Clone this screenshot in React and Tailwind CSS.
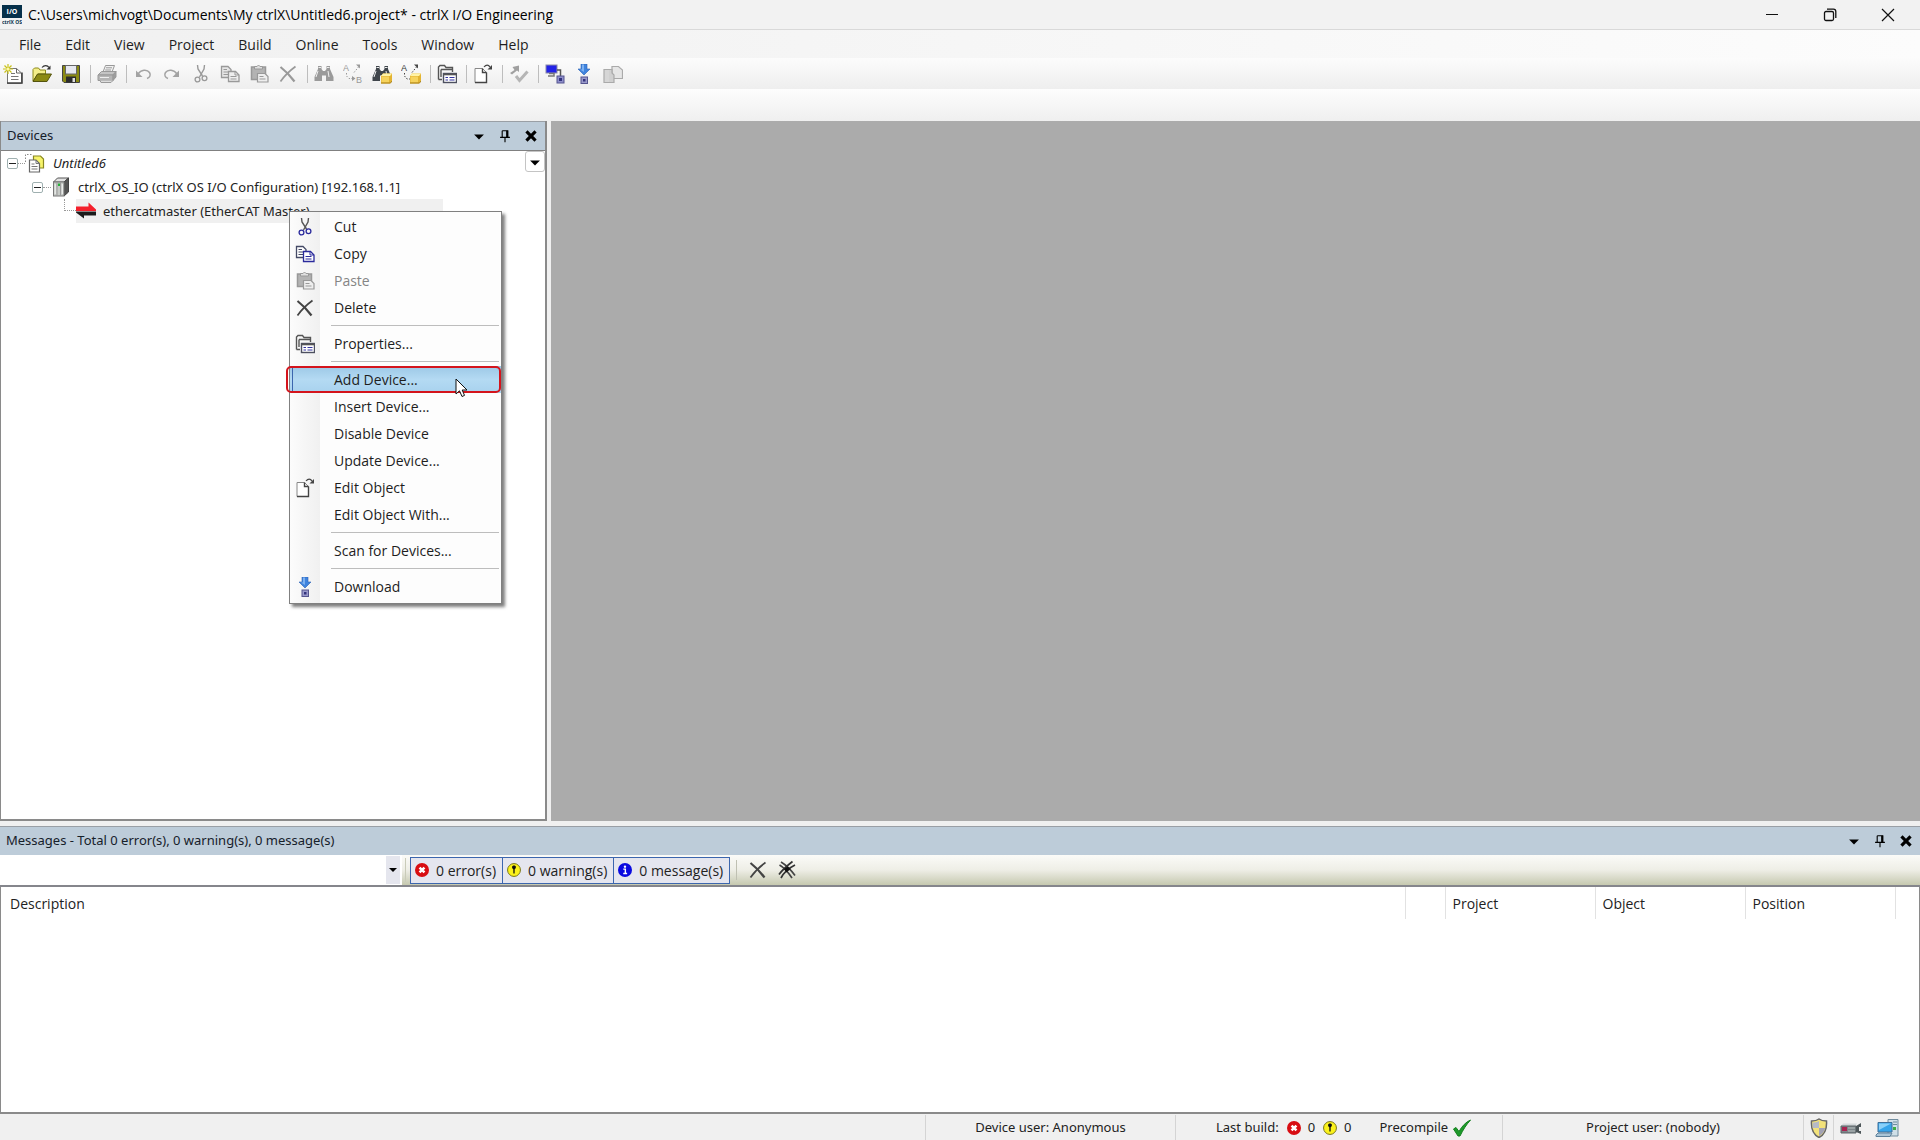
/**
 * ctrlX I/O Engineering main window
 * - Title bar, menu bar and toolbars
 * - Devices tree with its context menu
 * - Messages panel and status bar
 */

const UI_FONT = "font-['Open_Sans','Noto_Sans',sans-serif]"
const TREE_FONT = "font-['Noto_Sans','DejaVu_Sans',sans-serif]"

/* ---------- Icons (20x20) ---------- */

const Svg = ({ children, className = 'size-5' }) => (
  <svg viewBox="0 0 20 20" className={`${className} shrink-0`} fill="none" aria-hidden="true">
    {children}
  </svg>
)

const AppIcon = () => (
  <Svg>
    <rect x="0" y="0" width="20" height="13" fill="#06304a" />
    <text x="10" y="9" fontSize="7" fontWeight="700" textAnchor="middle" fill="#fff" fontFamily="Open Sans">I/O</text>
    <text x="10" y="19" fontSize="5" fontWeight="700" textAnchor="middle" fill="#06304a" fontFamily="Open Sans">ctrlX OS</text>
  </Svg>
)

const NewIcon = () => (
  <Svg>
    <path d="M4.500 4.500H13.500L18.500 9V19.500H4.500Z" fill="#fff" stroke="#777" />
    <path d="M4 19H19V8.500" stroke="#444" strokeWidth="1.600" />
    <path d="M13.500 4.500V9H18" stroke="#666" />
    <path d="M8 9.500H12M8 12.500H15.500M8 15.500H15.500" stroke="#777" />
    <path d="M5 0V10M0 5H10M1.500 1.500L8.500 8.500M8.500 1.500L1.500 8.500" stroke="#c9c21b" strokeWidth="1.200" />
    <circle cx="5" cy="5" r="1.600" fill="#fff9a8" />
  </Svg>
)

const OpenIcon = () => (
  <Svg>
    <path d="M1 17V5.500L2.500 4H6.500L8 6H13.500V10H6L1 17Z" fill="#f4ee8a" stroke="#8d8a1c" />
    <path d="M1 17.500L5.500 10H19.500L15 17.500Z" fill="#8c8a14" stroke="#55540e" />
    <path d="M10 3.500C12 1 15.500 1 17 3.500" stroke="#333" strokeWidth="1.200" />
    <path d="M18.500 1.500V5.500H14.500Z" fill="#333" />
  </Svg>
)

const SaveIcon = () => (
  <Svg>
    <path d="M1.500 1.500H18.500V18.500H3L1.500 17Z" fill="#8a8a12" stroke="#444" />
    <rect x="4.500" y="1.500" width="11" height="8.500" fill="#e6e8f0" stroke="#666" />
    <rect x="5" y="12.500" width="10" height="6" fill="#2c2c2c" />
    <rect x="11.500" y="14" width="2.500" height="4" fill="#ddd" />
  </Svg>
)

const PrintIcon = () => (
  <Svg>
    <path d="M6 8L8.500 1.500H17.500L15 8Z" fill="#f1f1f1" stroke="#999" />
    <path d="M9 3.800H15M8.200 6H14" stroke="#999" />
    <path d="M1 11L4.500 7.500H19L16 11Z" fill="#c4c4c4" stroke="#999" />
    <path d="M1 11H16V16.500H1Z" fill="#b5b5b5" stroke="#999" />
    <path d="M16 11L19 7.500V13L16 16.500Z" fill="#9d9d9d" stroke="#999" />
    <path d="M3 16.500L4 18.500H14L16 16.500" fill="#ddd" stroke="#999" />
    <path d="M3 13.500H12" stroke="#eee" />
  </Svg>
)

const UndoIcon = () => (
  <Svg>
    <path d="M5 10C8 5.500 14 5 16.500 8.500C18 11 17 13.500 14 14.500" stroke="#a3a3a3" strokeWidth="1.500" />
    <path d="M3 6.500V13H9.500Z" fill="#a3a3a3" />
  </Svg>
)

const RedoIcon = () => (
  <Svg>
    <path d="M15 10C12 5.500 6 5 3.500 8.500C2 11 3 13.500 6 14.500" stroke="#a3a3a3" strokeWidth="1.500" />
    <path d="M17 6.500V13H10.500Z" fill="#a3a3a3" />
  </Svg>
)

const CutIcon = ({ muted }) => (
  <Svg>
    <path d="M6.500 1L7 5L11.500 12M13.500 1L13 5L8.500 13" stroke={muted ? '#999' : '#555'} strokeWidth="1.400" />
    <circle cx="6.500" cy="15.500" r="2.400" stroke={muted ? '#999' : '#2a2a9c'} strokeWidth="1.300" />
    <circle cx="13.500" cy="14.200" r="2.400" stroke={muted ? '#999' : '#2a2a9c'} strokeWidth="1.300" />
  </Svg>
)

const CopyIcon = ({ muted }) => (
  <Svg>
    <path d="M1.500 2.500H8L11 5.500V13.500H1.500Z" fill={muted ? '#e6e6e6' : '#fff'} stroke={muted ? '#999' : '#444a66'} strokeWidth="1.300" />
    <path d="M3.500 5.500H7M3.500 8H8M3.500 10.500H8" stroke={muted ? '#999' : '#444a66'} />
    <path d="M8.500 7.500H15.500L19 11V17.500H8.500Z" fill={muted ? '#eee' : '#fff'} stroke={muted ? '#999' : '#2a2a9c'} strokeWidth="1.300" />
    <path d="M15 7.500V11H19M10.500 12.500H16.500M10.500 15H16.500" stroke={muted ? '#999' : '#2a2a9c'} />
  </Svg>
)

const PasteIcon = () => (
  <Svg>
    <path d="M2.500 3H16.500V15.500H2.500Z" fill="#b3b3b3" stroke="#999" strokeWidth="1.500" />
    <path d="M5.500 5V2.500H8L9.500 1L11 2.500H13.500V5Z" fill="#e0e0e0" stroke="#999" />
    <path d="M8.500 9.500H16L19 12.500V18H8.500Z" fill="#eee" stroke="#999" strokeWidth="1.200" />
    <path d="M10.500 12.500H14.500M10.500 15H16.500" stroke="#999" />
  </Svg>
)

const DeleteIcon = ({ muted }) => (
  <Svg>
    <path d="M2.500 3C7 6.500 12.500 12 16.500 17.500" stroke={muted ? '#999' : '#444'} strokeWidth="2.200" />
    <path d="M17.500 2.500C12 6.500 7 11 2.500 17.500" stroke={muted ? '#999' : '#444'} strokeWidth="1.700" />
  </Svg>
)

const Binoculars = ({ color }) => (
  <>
    <path d="M4 2H7.500V5L9 7H11L12.500 5V2H16V5L19.500 13V17H12V11.500H8V17H.500V13L4 5Z" fill={color} />
    <path d="M4 7L2 13M14 7L15 13M4.500 3.500H7M13 3.500H15.500" stroke="#eee" />
  </>
)

const YellowBase = () => (
  <>
    <path d="M9 12L11 9.500H20V17L18 19.500H9Z" fill="#e3b432" />
    <path d="M9 12L11 9.500H20L18 12Z" fill="#fff3a6" />
    <path d="M9.500 12.500H17V18.500H9.500Z" fill="#f6d35c" />
    <path d="M9 19H18.500L20 17" stroke="#a8811b" />
  </>
)

const FindIcon = () => (
  <Svg><Binoculars color="#9a9a9a" /></Svg>
)

const FindProjectIcon = () => (
  <Svg>
    <Binoculars color="#3f454b" />
    <YellowBase />
  </Svg>
)

const ReplaceIcon = () => (
  <Svg>
    <text x="0" y="7" fontSize="9" fill="#999" fontFamily="Liberation Sans">A</text>
    <text x="13" y="19" fontSize="9" fill="#999" fontFamily="Liberation Sans">B</text>
    <path d="M11 8.500L15.500 3M3.500 9V12L6 14.500H9" stroke="#999" strokeDasharray="1.500 1.500" />
    <path d="M13 .500H17V4.500ZM9 12L12.500 14.500L9 17Z" fill="#999" />
  </Svg>
)

const ReplaceProjectIcon = () => (
  <Svg>
    <text x="0" y="7" fontSize="9" fill="#333" fontFamily="Liberation Sans">A</text>
    <path d="M11 8.500L15.500 3M3.500 9V12L6 15H9" stroke="#444" strokeDasharray="1.500 1.500" />
    <path d="M13 .500H17V4.500Z" fill="#444" />
    <YellowBase />
  </Svg>
)

const PropertiesIcon = () => (
  <Svg>
    <path d="M1.500 15.500V3L3 1.500H7.500L9 3.500H15.500V8M1.500 15.500H5M4 5.500H16M4 5.500V13" stroke="#555" strokeWidth="1.400" />
    <rect x="6.500" y="9.500" width="13" height="9" fill="#fff" stroke="#4d5060" strokeWidth="1.400" />
    <path d="M6.500 10.500H19.500" stroke="#555" strokeWidth="1.600" />
    <path d="M8.500 13.500H11M8.500 16H11M12.500 13.500H17.500M12.500 16H17.500" stroke="#3434a0" strokeWidth="1.200" />
  </Svg>
)

const EditObjectIcon = () => (
  <Svg>
    <path d="M2 4.500H9.500L13.500 8.500V18.500H2Z" fill="#fff" stroke="#888" />
    <path d="M2 18.500H13.500V8.500M9.500 4.500V8.500H13.500" stroke="#444" strokeWidth="1.400" />
    <path d="M11 3C13 .500 15.500 .500 17 3" stroke="#444" strokeWidth="1.200" />
    <path d="M19 1V5.500H14.500Z" fill="#444" />
  </Svg>
)

const CheckArrowIcon = () => (
  <Svg>
    <path d="M1 9L5.500 6L3.500 3L10 1.500V8L8 6.500L3 10.500Z" fill="#a0a0a0" />
    <path d="M7 12L10.500 16.500L18.500 7.500" stroke="#b5b5b5" strokeWidth="3" />
  </Svg>
)

const LoginIcon = () => (
  <Svg>
    <rect x="1" y="1" width="11" height="8" fill="#2222e6" stroke="#8a8aa8" />
    <path d="M4 9.500H9V12H3" stroke="#777" strokeWidth="1.500" />
    <path d="M12 6H15.500V12" stroke="#555" strokeWidth="1.500" />
    <rect x="12" y="12" width="7" height="7" fill="#8e8ecb" stroke="#55558f" />
    <rect x="14" y="14" width="3" height="3" fill="#33337c" />
  </Svg>
)

const DownloadIcon = () => (
  <Svg>
    <path d="M7 0H13V5H16L10 11L4 5H7Z" fill="#3f83dd" stroke="#2c62b5" strokeWidth=".600" />
    <path d="M8 .500H10V8L6 5.500H8Z" fill="#7db1f0" />
    <rect x="7" y="13" width="6.500" height="6.500" fill="#9a9acb" stroke="#55558f" />
    <rect x="9" y="15" width="2.500" height="2.500" fill="#33337c" />
  </Svg>
)

const PagesIcon = () => (
  <Svg>
    <path d="M1 5.500H8.500V18.500H1Z" fill="#d6d6d6" stroke="#aaa" strokeWidth="1.200" />
    <path d="M9 2.500H15.500L19.500 6V14.500H9Z" fill="#e6e6e6" stroke="#aaa" strokeWidth="1.200" />
    <path d="M6 5.500H9V9L11 11V18.500H6" fill="#d0d0d0" stroke="#aaa" strokeWidth="1.200" />
  </Svg>
)

const ErrorIcon = () => (
  <Svg className="size-[14px]">
    <circle cx="10" cy="10" r="10" fill="#d80d12" />
    <path d="M6.500 6.500L13.500 13.500M13.500 6.500L6.500 13.500" stroke="#fff" strokeWidth="3.600" />
  </Svg>
)

const WarningIcon = () => (
  <Svg className="size-[14px]">
    <circle cx="10" cy="10" r="9.200" fill="#fbf21c" stroke="#77741c" strokeWidth="1.400" />
    <path d="M10 3.500C13.500 3.500 13.500 7 11 9L10.900 15H9.100L9 9C6.500 7 6.500 3.500 10 3.500Z" fill="#111" />
  </Svg>
)

const InfoIcon = () => (
  <Svg className="size-[14px]">
    <circle cx="10" cy="10" r="10" fill="#0a0ae0" />
    <circle cx="10" cy="5.200" r="1.700" fill="#fff" />
    <path d="M7.500 8.800H10.500V14.500M7.500 15H13" stroke="#fff" strokeWidth="2" />
  </Svg>
)

const DeleteAllIcon = () => (
  <Svg>
    <path d="M2.500 5C7 7.500 11 12 15 18M4 2C9 5 14 10 18 15.500" stroke="#444" strokeWidth="1.700" />
    <path d="M18 5C12 8 7 12 4 18M15.500 1.500C11 5 6 9 2 14.500" stroke="#333" strokeWidth="1.700" />
    <path d="M7 9L10.500 6.500L13.500 9L9.500 12.500Z" fill="#111" />
  </Svg>
)

const ProjectIcon = () => (
  <Svg>
    <path d="M.500 9V1.500H8" stroke="#888" strokeDasharray="1.500 1.500" />
    <path d="M8.500 3H15.500L18.500 6V15H8.500Z" fill="#f6f36a" stroke="#8a8820" strokeWidth="1.200" />
    <path d="M4.500 7H11L14.500 10.500V19H4.500Z" fill="#fff" stroke="#666" strokeWidth="1.200" />
    <path d="M11 7V10.500H14.500M6.500 11H9.500M6.500 13.500H12.500M6.500 16H12.500" stroke="#777" />
  </Svg>
)

const ControllerIcon = () => (
  <Svg>
    <path d="M2.500 5L6.500 1H17.500L13 5Z" fill="#e2e2e2" stroke="#555" />
    <path d="M13 5L17.500 1V15L13 19Z" fill="#555" stroke="#444" />
    <rect x="2.500" y="5" width="10.500" height="14" fill="#c6cac6" stroke="#777" />
    <path d="M6 5V19M9.500 5V19" stroke="#999" />
    <rect x="7" y="6.500" width="2" height="2.500" fill="#27b13a" />
    <path d="M4.200 7V17M11.300 7V17" stroke="#f4f4f4" />
  </Svg>
)

const EthercatIcon = () => (
  <Svg>
    <path d="M0 5.500H12.500V1.500L20 8.500V10H0Z" fill="#f4202c" />
    <path d="M20 14.500H8V17.500L0 11.500V10.500H20Z" fill="#1c1c1c" />
  </Svg>
)

const PinIcon = () => (
  <Svg className="size-[14px]">
    <path d="M6 2.500H14V11.500M6 2.500V11.500M3 12H17M10 12V19" stroke="#000" strokeWidth="1.600" />
    <path d="M13 2.500V11.500" stroke="#000" strokeWidth="2.800" />
  </Svg>
)

const CloseIcon = () => (
  <Svg className="size-[14px]">
    <path d="M3.500 3.500L16.500 16.500M16.500 3.500L3.500 16.500" stroke="#000" strokeWidth="4.500" />
  </Svg>
)

const CaretIcon = () => (
  <Svg className="size-[14px]">
    <path d="M3 8H17L10 15Z" fill="#000" />
  </Svg>
)

const ShieldIcon = () => (
  <Svg>
    <path d="M10 1C12 2.500 15 3 17.500 3C18 10 16.500 16 10 19.500C3.500 16 2 10 2.500 3C5 3 8 2.500 10 1Z" fill="#f3e27a" stroke="#666" strokeWidth="1.500" />
    <path d="M10 3V10H3.800C3.500 8 3.500 6 3.800 4.500C6 4.500 8 4 10 3Z" fill="#b6bac6" />
    <path d="M10 10H16.200C15.500 13.500 13.500 16 10 18Z" fill="#a2a2b4" />
  </Svg>
)

const DeviceIcon = () => (
  <svg viewBox="0 0 22 20" className="h-5 w-[22px]" fill="none" aria-hidden="true">
    <path d="M1 8L3 5.500H17L15 8Z" fill="#d4d8da" />
    <path d="M1 8H16V15H1Z" fill="#7d8589" stroke="#5c6468" />
    <rect x="2" y="9" width="5" height="4" fill="#a92350" />
    <path d="M8 10H15M8 13H15" stroke="#b8c0c0" />
    <path d="M16 8L21 5V9H19V13H21V16L16 14Z" fill="#4d5659" />
  </svg>
)

const NetworkIcon = () => (
  <svg viewBox="0 0 24 20" className="h-5 w-6" fill="none" aria-hidden="true">
    <path d="M13 1.500H23V18H13Z" fill="#cfdfe8" stroke="#708c9e" />
    <path d="M18 4H22M18 6.500H22" stroke="#708c9e" />
    <rect x="18" y="9" width="3" height="3" fill="#3dae45" />
    <path d="M3 4.500H17V14H3Z" fill="#35a4ea" stroke="#3e6f98" />
    <path d="M4 5.500H16L4 12Z" fill="#8ad0f8" />
    <path d="M1 17L3 15H17L15 18.500H1Z" fill="#a9c4d6" stroke="#5c7f99" />
  </svg>
)

/* ---------- Data ---------- */

const menus = ['File', 'Edit', 'View', 'Project', 'Build', 'Online', 'Tools', 'Window', 'Help']

const toolGroups = [
  [['New', <NewIcon />], ['Open', <OpenIcon />], ['Save', <SaveIcon />]],
  [['Print', <PrintIcon />]],
  [
    ['Undo', <UndoIcon />],
    ['Redo', <RedoIcon />],
    ['Cut', <CutIcon muted />],
    ['Copy', <CopyIcon muted />],
    ['Paste', <PasteIcon />],
    ['Delete', <DeleteIcon muted />],
  ],
  [
    ['Find', <FindIcon />],
    ['Replace', <ReplaceIcon />],
    ['Find in project', <FindProjectIcon />],
    ['Replace in project', <ReplaceProjectIcon />],
  ],
  [['Properties', <PropertiesIcon />]],
  [['Edit object', <EditObjectIcon />]],
  [['Check', <CheckArrowIcon />]],
  [['Login', <LoginIcon />], ['Download', <DownloadIcon />], ['Compare', <PagesIcon />]],
]

const contextGroups = [
  [
    { label: 'Cut', icon: <CutIcon /> },
    { label: 'Copy', icon: <CopyIcon /> },
    { label: 'Paste', icon: <PasteIcon />, disabled: true },
    { label: 'Delete', icon: <DeleteIcon /> },
  ],
  [{ label: 'Properties...', icon: <PropertiesIcon /> }],
  [
    { label: 'Add Device...', active: true },
    { label: 'Insert Device...' },
    { label: 'Disable Device' },
    { label: 'Update Device...' },
    { label: 'Edit Object', icon: <EditObjectIcon /> },
    { label: 'Edit Object With...' },
  ],
  [{ label: 'Scan for Devices...' }],
  [{ label: 'Download', icon: <DownloadIcon /> }],
]

/* ---------- Parts ---------- */

const TitleBar = () => (
  <header className="flex h-[30px] shrink-0 items-center border-b border-[#d9d9d9] bg-[#f2f2f2] pl-[2px]">
    <AppIcon />
    <h1 className="ml-[6px] flex-1 truncate text-[14px] text-black">
      C:\Users\michvogt\Documents\My ctrlX\Untitled6.project* - ctrlX I/O Engineering
    </h1>
    <div className="flex pr-[3px]">
      <button aria-label="Minimize" className="flex h-7 w-[58px] items-center justify-center">
        <svg viewBox="0 0 14 14" className="size-[14px]" stroke="#111"><path d="M1 6.500H13" /></svg>
      </button>
      <button aria-label="Restore" className="flex h-7 w-[58px] items-center justify-center">
        <svg viewBox="0 0 14 14" className="size-[14px]" fill="none" stroke="#111" strokeWidth="1.300">
          <rect x="1.500" y="3.500" width="9" height="9" rx="1.500" />
          <path d="M4 1.200H10.500Q12.800 1.200 12.800 3.500V10" />
        </svg>
      </button>
      <button aria-label="Close" className="flex h-7 w-[58px] items-center justify-center">
        <svg viewBox="0 0 14 14" className="size-[14px]" stroke="#111" strokeWidth="1.200"><path d="M1 1L13 13M13 1L1 13" /></svg>
      </button>
    </div>
  </header>
)

const MenuBar = () => (
  <nav className="flex h-7 shrink-0 items-center bg-linear-to-r from-[#f0f0f0] to-[#fcfcfc] pl-[7px]">
    {menus.map((menu) => (
      <button key={menu} className="px-3 text-[14px] text-[#1e1e1e]">{menu}</button>
    ))}
  </nav>
)

const Toolbar = () => (
  <>
    <div className="flex h-[31px] shrink-0 items-center bg-linear-to-b from-[#fcfcfc] to-[#eeeeee]">
      {toolGroups.map((group, i) => (
        <div key={i} className="flex items-center">
          {i > 0 && <span className="mx-[3px] h-[18px] w-px bg-[#bdbdbd]" />}
          {group.map(([label, icon]) => (
            <button key={label} aria-label={label} className="flex h-6 w-[29px] items-center pl-[3px]">
              {icon}
            </button>
          ))}
        </div>
      ))}
    </div>
    <div className="h-8 shrink-0 bg-linear-to-b from-[#fdfdfd] to-[#efefef]" />
  </>
)

const PanelHeader = ({ title }) => (
  <div className="flex h-[29px] shrink-0 items-center border-t border-[#9a9fa5] bg-[#bdccd9] pr-[2px] pl-[6px]">
    <h2 className={`${TREE_FONT} flex-1 truncate text-[13px] text-[#16202a]`}>{title}</h2>
    <div className="flex items-center gap-[2px]">
      <button aria-label={`${title} options`} className="flex size-6 items-center justify-center"><CaretIcon /></button>
      <button aria-label={`Pin ${title}`} className="flex size-6 items-center justify-center"><PinIcon /></button>
      <button aria-label={`Close ${title}`} className="flex size-6 items-center justify-center"><CloseIcon /></button>
    </div>
  </div>
)

const Expander = () => (
  <button aria-label="Collapse" className="flex size-[11px] items-center justify-center rounded-[2px] border border-[#9fb0b0] bg-white">
    <span className="h-px w-[7px] bg-[#222]" />
  </button>
)

const ContextMenu = () => (
  <div
    role="menu"
    className={`${UI_FONT} absolute top-[90px] left-[288px] z-10 w-[213px] border border-[#808080] bg-[#fdfdfd] bg-linear-to-r from-[#fcfcfc] to-[#f0f0f0] bg-[length:30px_100%] bg-no-repeat pt-px pb-[3px] shadow-[3px_3px_3px_rgba(0,0,0,0.5)]`}
  >
    {contextGroups.map((group, i) => (
      <div key={i}>
        {i > 0 && <div className="my-1 ml-[41px] mr-[2px] h-px bg-[#bdbdbd]" />}
        {group.map(({ label, icon, disabled, active }) => (
          <button
            key={label}
            role="menuitem"
            disabled={disabled}
            className={`relative flex h-[27px] w-full items-center text-left text-[14px] ${
              disabled ? 'text-[#858585]' : 'text-[#1e1e1e]'
            } ${active ? 'bg-linear-to-b from-[#9cc8e6] via-[#b4daf3] to-[#a8d2ee]' : ''}`}
          >
            <span className="flex w-[30px] justify-center">{icon}</span>
            <span className="pl-[14px]">{label}</span>
            {active && (
              <>
                <span className="absolute inset-y-[2px] left-[2px] w-px bg-[#3c66ae]" />
                <span className="absolute inset-y-0 -left-1 right-0 rounded-[5px] border-2 border-[#d4141c]" />
                <svg viewBox="0 0 14 20" className="absolute top-3 left-[165px] h-5 w-[14px]" aria-hidden="true">
                  <path d="M1 1V16L4.500 12.800L7 18.500L9.500 17.400L7.200 12H12Z" fill="#fff" stroke="#111" />
                </svg>
              </>
            )}
          </button>
        ))}
      </div>
    ))}
  </div>
)

const DevicesPanel = () => (
  <section className="relative flex w-[547px] shrink-0 flex-col border-r-2 border-b-2 border-l border-[#8a8a8a] bg-white">
    <PanelHeader title="Devices" />
    <div className="flex flex-1 items-start justify-between border-t border-[#808080]">
      <ul role="tree" className={`${TREE_FONT} text-[13px] leading-6 text-[#222]`}>
        <li role="treeitem" className="flex h-6 items-center pl-[6px]">
          <Expander />
          <span className="w-[7px] border-t border-dotted border-[#999]" />
          <ProjectIcon />
          <em className="ml-[8px]">Untitled6</em>
        </li>
        <li role="treeitem" className="flex h-6 items-center pl-[31px]">
          <Expander />
          <span className="w-[8px] border-t border-dotted border-[#999]" />
          <ControllerIcon />
          <span className="ml-[7px]">ctrlX_OS_IO (ctrlX OS I/O Configuration) [192.168.1.1]</span>
        </li>
        <li role="treeitem" aria-selected="true" className="flex h-6 items-center pl-[63px]">
          <span className="h-3 w-3 self-start border-b border-l border-dotted border-[#999]" />
          <span className="flex h-6 w-[367px] items-center bg-[#f0f0f0]">
            <EthercatIcon />
            <span className="ml-[7px]">ethercatmaster (EtherCAT Master)</span>
          </span>
        </li>
      </ul>
      <button aria-label="Tree options" className="flex h-[21px] w-5 items-center justify-center rounded-[3px] border border-[#c4c4c4] bg-white">
        <CaretIcon />
      </button>
    </div>
    <ContextMenu />
  </section>
)

const MessageToggle = ({ icon, children }) => (
  <button className="-ml-px flex h-[27px] items-center gap-[7px] border border-[#3c66ae] bg-[#e5e6ef] pr-[6px] pl-1 text-[14px] text-[#222]">
    {icon}
    {children}
  </button>
)

const MessagesPanel = () => (
  <section className="flex h-[288px] shrink-0 flex-col border-b-2 border-[#8a8a8a] bg-white">
    <PanelHeader title="Messages - Total 0 error(s), 0 warning(s), 0 message(s)" />
    <div className="flex h-8 shrink-0 items-center border-b-2 border-[#85868c] bg-linear-to-b from-[#fbfbf8] via-[#eeeee6] to-[#c6c9b0]">
      <div className="relative flex h-full w-[402px] items-center bg-white">
        <select aria-label="Message category" className="h-full w-full appearance-none bg-white" />
        <span className="pointer-events-none absolute inset-y-px right-[2px] flex w-[14px] items-center justify-center bg-[#e5e6ee]">
          <svg viewBox="0 0 8 4" className="h-1 w-2"><path d="M0 0H8L4 4Z" fill="#000" /></svg>
        </span>
      </div>
      <span className="mx-[3px] h-6 w-px bg-[#c9cbb9]" />
      <div className="ml-[2px] flex">
        <MessageToggle icon={<ErrorIcon />}>0 error(s)</MessageToggle>
        <MessageToggle icon={<WarningIcon />}>0 warning(s)</MessageToggle>
        <MessageToggle icon={<InfoIcon />}>0 message(s)</MessageToggle>
      </div>
      <span className="mx-[6px] h-5 w-px bg-[#bfc0b2]" />
      <button aria-label="Delete message" className="flex w-[29px] justify-center"><DeleteIcon /></button>
      <button aria-label="Delete all messages" className="flex w-[29px] justify-center"><DeleteAllIcon /></button>
    </div>
    <div className="flex-1 overflow-hidden border-x border-[#8a8a8a]">
      <table className="w-full table-fixed text-left text-[14px] text-[#222]">
        <thead>
          <tr className="h-8">
            <th className="border-r border-[#e2e2e2] pl-[9px] font-normal">Description</th>
            <th className="w-10 border-r border-[#e2e2e2]" />
            <th className="w-[150px] border-r border-[#e2e2e2] pl-[7px] font-normal">Project</th>
            <th className="w-[150px] border-r border-[#e2e2e2] pl-[7px] font-normal">Object</th>
            <th className="w-[150px] border-r border-[#e2e2e2] pl-[7px] font-normal">Position</th>
            <th className="w-6" />
          </tr>
        </thead>
      </table>
    </div>
  </section>
)

const StatusBar = () => (
  <footer className={`${TREE_FONT} flex h-[26px] shrink-0 items-center bg-[#f0f0f0] pt-px text-[13px] text-[#222]`}>
    <div className="h-full flex-1" />
    <div className="flex h-full w-[250px] items-center justify-center border-l border-[#d4d4d4]">Device user: Anonymous</div>
    <div className="flex h-full w-[327px] items-center border-l border-[#d4d4d4] pl-10">
      <span>Last build:</span>
      <span className="ml-2 flex items-center gap-[7px]"><ErrorIcon />0</span>
      <span className="ml-2 flex items-center gap-[7px]"><WarningIcon />0</span>
      <span className="ml-7 flex items-center gap-1">
        Precompile
        <Svg><path d="M1.500 11L4 9.500L7 13.500C10 8 14 4 18.500 2C14 7 11 12 8 18H6Z" fill="#1d9a2a" stroke="#15801f" /></Svg>
      </span>
    </div>
    <div className="flex h-full w-[301px] items-center justify-center border-l border-[#d4d4d4]">Project user: (nobody)</div>
    <div className="flex h-full w-[30px] items-center justify-center border-l border-[#d4d4d4]"><ShieldIcon /></div>
    <div className="flex h-full w-[34px] items-center justify-center border-l border-[#d4d4d4]"><DeviceIcon /></div>
    <div className="flex h-full w-[53px] items-center pl-2"><NetworkIcon /></div>
  </footer>
)

const App = () => {
  return (
    <div className={`${UI_FONT} flex h-screen flex-col overflow-hidden bg-[#f0f0f0]`}>
      <TitleBar />
      <MenuBar />
      <Toolbar />

      {/* Devices tree + empty editor area */}
      <main className="flex min-h-0 flex-1 gap-1">
        <DevicesPanel />
        <div className="flex-1 bg-[#ababab]" />
      </main>

      <div className="mt-[5px] flex shrink-0 flex-col">
        <MessagesPanel />
      </div>
      <StatusBar />
    </div>
  )
}

export default App
